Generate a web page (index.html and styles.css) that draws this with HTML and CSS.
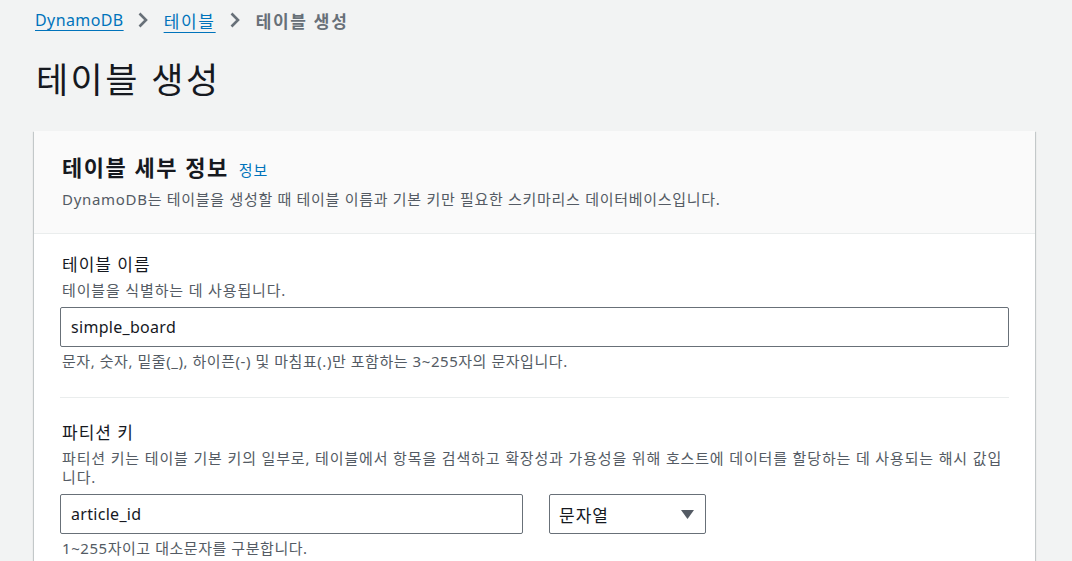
FILE: index.html
```html
<!DOCTYPE html>
<html lang="ko">
<head>
<meta charset="utf-8">
<link rel="stylesheet" href="styles.css">
</head>
<body>
<div class="page">
  <nav class="crumbs">
    <a class="crumb-link latin" href="#">DynamoDB</a>
    <svg class="chev" width="10" height="16" viewBox="0 0 10 16"><path d="M1.5 1.5l6.5 6.5-6.5 6.5" fill="none" stroke="#687078" stroke-width="2.6"/></svg>
    <a class="crumb-link" href="#">테이블</a>
    <svg class="chev" width="10" height="16" viewBox="0 0 10 16"><path d="M1.5 1.5l6.5 6.5-6.5 6.5" fill="none" stroke="#687078" stroke-width="2.6"/></svg>
    <span class="crumb-current">테이블 생성</span>
  </nav>
  <h1 class="page-title">테이블 생성</h1>
  <section class="card">
    <header class="card-head">
      <h2 class="card-title">테이블 세부 정보 <a class="info" href="#">정보</a></h2>
      <p class="card-desc">DynamoDB는 테이블을 생성할 때 테이블 이름과 기본 키만 필요한 스키마리스 데이터베이스입니다.</p>
    </header>
    <div class="card-body">
      <div class="field">
        <div class="label">테이블 이름</div>
        <div class="desc">테이블을 식별하는 데 사용됩니다.</div>
        <div class="input">simple_board</div>
        <div class="hint">문자, 숫자, 밑줄(_), 하이픈(-) 및 마침표(.)만 포함하는 3~255자의 문자입니다.</div>
      </div>
      <hr class="divider">
      <div class="field">
        <div class="label">파티션 키</div>
        <div class="desc">파티션 키는 테이블 기본 키의 일부로, 테이블에서 항목을 검색하고 확장성과 가용성을 위해 호스트에 데이터를 할당하는 데 사용되는 해시 값입니다.</div>
        <div class="row">
          <div class="input input-key">article_id</div>
          <div class="select">문자열<svg width="13" height="9" viewBox="0 0 13 9"><path d="M0 0h13L6.5 9z" fill="#545b64"/></svg></div>
        </div>
        <div class="hint">1~255자이고 대소문자를 구분합니다.</div>
      </div>
    </div>
  </section>
</div>
</body>
</html>
```
FILE: styles.css
```css
* { box-sizing: border-box; }
html, body { margin: 0; padding: 0; }
body {
  background: #f2f3f3;
  font-family: "Noto Sans", "Noto Sans CJK KR", sans-serif;
  color: #16191f;
  overflow: hidden;
}
.page {
  padding: 0 37px 0 34px;
}
.crumbs {
  display: flex;
  align-items: center;
  height: 40px;
  font-size: 17px;
  letter-spacing: 1.7px;
}
.crumb-link {
  color: #0073bb;
  text-decoration: underline;
  text-underline-offset: 4px;
}
.crumb-link.latin {
  font-size: 16px;
  letter-spacing: 0.4px;
  margin-left: 1px;
}
.chev { margin: 0 16px 0 14px; flex: none; }
.crumb-current {
  color: #687078;
  font-weight: 700;
}
.page-title {
  margin: 18px 0 0 2px;
  font-size: 35px;
  letter-spacing: 2.4px;
  font-weight: 400;
  line-height: 44px;
  height: 73px;
}
.card {
  background: #fff;
  box-shadow: 0 1px 1px 0 rgba(0,28,36,0.3), 1px 1px 1px 0 rgba(0,28,36,0.15), -1px 1px 1px 0 rgba(0,28,36,0.15);
}
.card-head {
  background: #fafafa;
  border-bottom: 1px solid #eaeded;
  padding: 20px 26px 0 28px;
  height: 103px;
}
.card-title {
  margin: 0;
  font-size: 22px;
  letter-spacing: 1.5px;
  font-weight: 700;
  line-height: 32px;
}
.info {
  font-size: 15px;
  letter-spacing: 0.8px;
  font-weight: 400;
  color: #0073bb;
  text-decoration: none;
  margin-left: 3px;
}
.card-desc {
  margin: 3px 0 0 0;
  font-size: 15px;
  letter-spacing: 0.7px;
  color: #545b64;
  line-height: 20px;
}
.card-body {
  padding: 19px 26px 20px 26px;
}
.field { display: flex; flex-direction: column; }
.label {
  font-size: 17px;
  letter-spacing: 1px;
  line-height: 24px;
  margin-left: 2px;
}
.desc {
  margin-top: 4px;
  font-size: 15px;
  letter-spacing: 0.85px;
  line-height: 19px;
  color: #545b64;
  margin-left: 2px;
}
.input {
  margin-top: 7px;
  height: 40px;
  border: 1px solid #687078;
  border-radius: 2px;
  padding: 0 10px;
  display: flex;
  align-items: center;
  font-size: 16px;
  letter-spacing: 0.3px;
  background: #fff;
}
.hint {
  margin-top: 4px;
  font-size: 15px;
  letter-spacing: 0.55px;
  line-height: 20px;
  color: #545b64;
  margin-left: 2px;
}
.divider {
  border: 0;
  border-top: 1px solid #eaeded;
  margin: 26px 0 23px 0;
}
.row {
  display: flex;
  gap: 26px;
}
.input-key { width: 463px; }
.select {
  margin-top: 7px;
  width: 157px;
  height: 40px;
  border: 1px solid #687078;
  border-radius: 2px;
  padding: 0 11px 0 9px;
  display: flex;
  align-items: center;
  justify-content: space-between;
  font-size: 17px;
  letter-spacing: 1px;
}
```
